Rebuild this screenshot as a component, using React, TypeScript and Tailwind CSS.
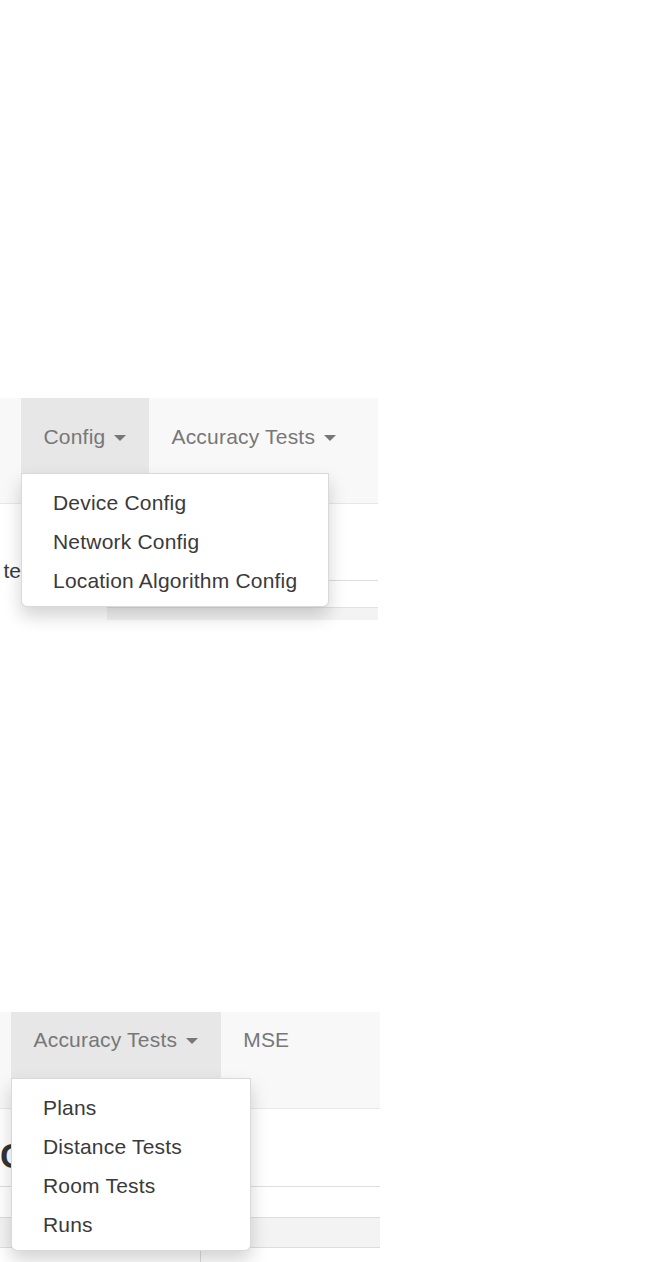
import type { ReactNode } from "react";

function Caret() {
  return (
    <span className="ml-[3px] inline-block h-0 w-0 border-x-[6px] border-t-[6px] border-x-transparent border-t-[#777] align-middle" />
  );
}

function Dropdown({ items }: { items: string[] }) {
  return (
    <ul className="absolute left-0 top-full z-10 min-w-[240px] rounded-b-[6px] border border-[rgba(0,0,0,0.15)] bg-white pt-[9px] pb-[6px] shadow-[0_9px_18px_rgba(0,0,0,0.175)]">
      {items.map((item) => (
        <li
          key={item}
          className="block whitespace-nowrap px-[31px] py-[4.5px] text-[21px] leading-[30px] tracking-[0.2px] text-[#3a3a3a]"
        >
          {item}
        </li>
      ))}
    </ul>
  );
}

function NavItem({
  label,
  caret,
  className,
  children,
}: {
  label: string;
  caret?: boolean;
  className: string;
  children?: ReactNode;
}) {
  return (
    <li className={`relative whitespace-nowrap px-[22.5px] text-[21px] leading-[30px] tracking-[0.2px] text-[#777] ${className}`}>
      {label}
      {caret ? (
        <>
          {" "}
          <Caret />
        </>
      ) : null}
      {children}
    </li>
  );
}

function ConfigShot() {
  return (
    <div className="w-[378px]">
      <div className="h-[106px] border-b border-[#e7e7e7] bg-[#f8f8f8]">
        <ul className="flex pl-[21px]">
          <NavItem label="Config" caret className="h-[75px] bg-[#e7e7e7] pt-[24px]">
            <Dropdown items={["Device Config", "Network Config", "Location Algorithm Config"]} />
          </NavItem>
          <NavItem label="Accuracy Tests" caret className="h-[75px] pt-[24px]" />
        </ul>
      </div>
      <div className="h-[116px]">
        <div className="h-[76px] w-[21px] overflow-visible pt-[55px] text-right text-[21px] leading-[24px] text-[#3a3a3a]">te</div>
        <div className="ml-[21px] h-[27px] border-t border-[#ddd]" />
        <div className="ml-[107px] h-[13px] border-t border-[#e2e2e2] bg-[#f3f3f3]" />
      </div>
    </div>
  );
}

function AccuracyShot() {
  return (
    <div className="w-[380px]">
      <div className="h-[97px] border-b border-[#e7e7e7] bg-[#f8f8f8]">
        <ul className="flex pl-[11px]">
          <NavItem label="Accuracy Tests" caret className="h-[66px] bg-[#e7e7e7] pt-[13px]">
            <Dropdown items={["Plans", "Distance Tests", "Room Tests", "Runs"]} />
          </NavItem>
          <NavItem label="MSE" className="h-[66px] pt-[13px]" />
        </ul>
      </div>
      <div className="h-[78px] border-b border-[#ddd] pt-[27px] text-[35px] font-bold leading-[40px] text-[#333]">C</div>
      <div className="h-[31px] border-b border-[#ddd]" />
      <div className="h-[30px] border-b border-[#ddd] bg-[#f3f3f3]" />
      <div className="h-[14px] w-[201px] border-r border-[#ddd]" />
    </div>
  );
}

export default function App() {
  return (
    <div className="h-[1262px] w-[672px] overflow-hidden bg-white pt-[398px] font-['Liberation_Sans',Arial,sans-serif]">
      <ConfigShot />
      <div className="mt-[392px]">
        <AccuracyShot />
      </div>
    </div>
  );
}
